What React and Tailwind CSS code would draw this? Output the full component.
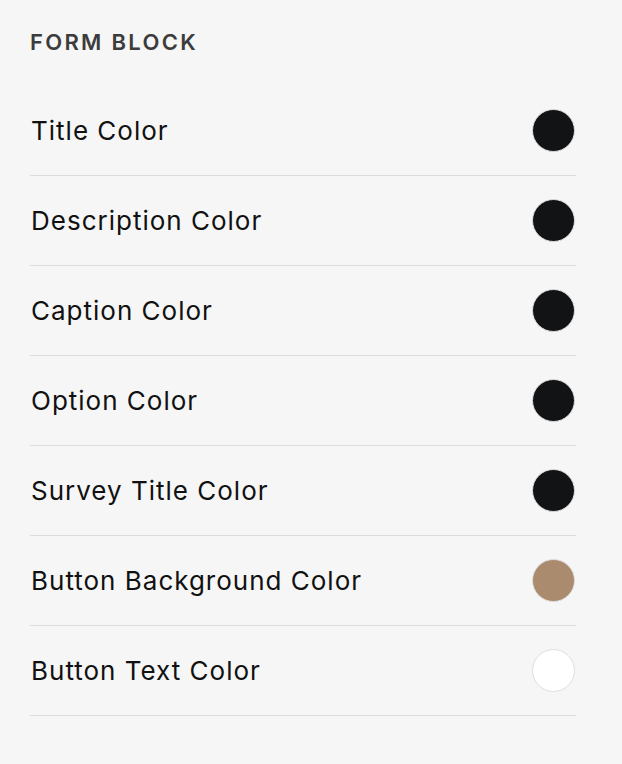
const rows = [
  { label: 'Title Color', color: 'bg-[#121315]' },
  { label: 'Description Color', color: 'bg-[#121315]' },
  { label: 'Caption Color', color: 'bg-[#121315]' },
  { label: 'Option Color', color: 'bg-[#121315]' },
  { label: 'Survey Title Color', color: 'bg-[#121315]' },
  { label: 'Button Background Color', color: 'bg-[#aa8b6e]' },
  { label: 'Button Text Color', color: 'bg-white' },
];

export default function App() {
  return (
    <div className="min-h-screen bg-[#f6f6f6] font-['Inter','Liberation_Sans',Arial,sans-serif]">
      <div className="w-[546px] ml-[30px] pt-[28px]">
        <h2 className="text-[22px] leading-[28px] font-semibold tracking-[2.3px] text-[#3c3c3c]">
          FORM BLOCK
        </h2>
        <div className="mt-[30px]">
          {rows.map((row) => (
            <div
              key={row.label}
              className="flex items-center justify-between h-[90px] border-b border-[#dcdcdc]"
            >
              <span className="text-[26px] tracking-[1px] text-[#111] ml-px">{row.label}</span>
              <span
                className={`w-[43px] h-[43px] rounded-full border-[1.5px] border-[#dedede] mr-px ${row.color}`}
              ></span>
            </div>
          ))}
        </div>
      </div>
    </div>
  );
}
